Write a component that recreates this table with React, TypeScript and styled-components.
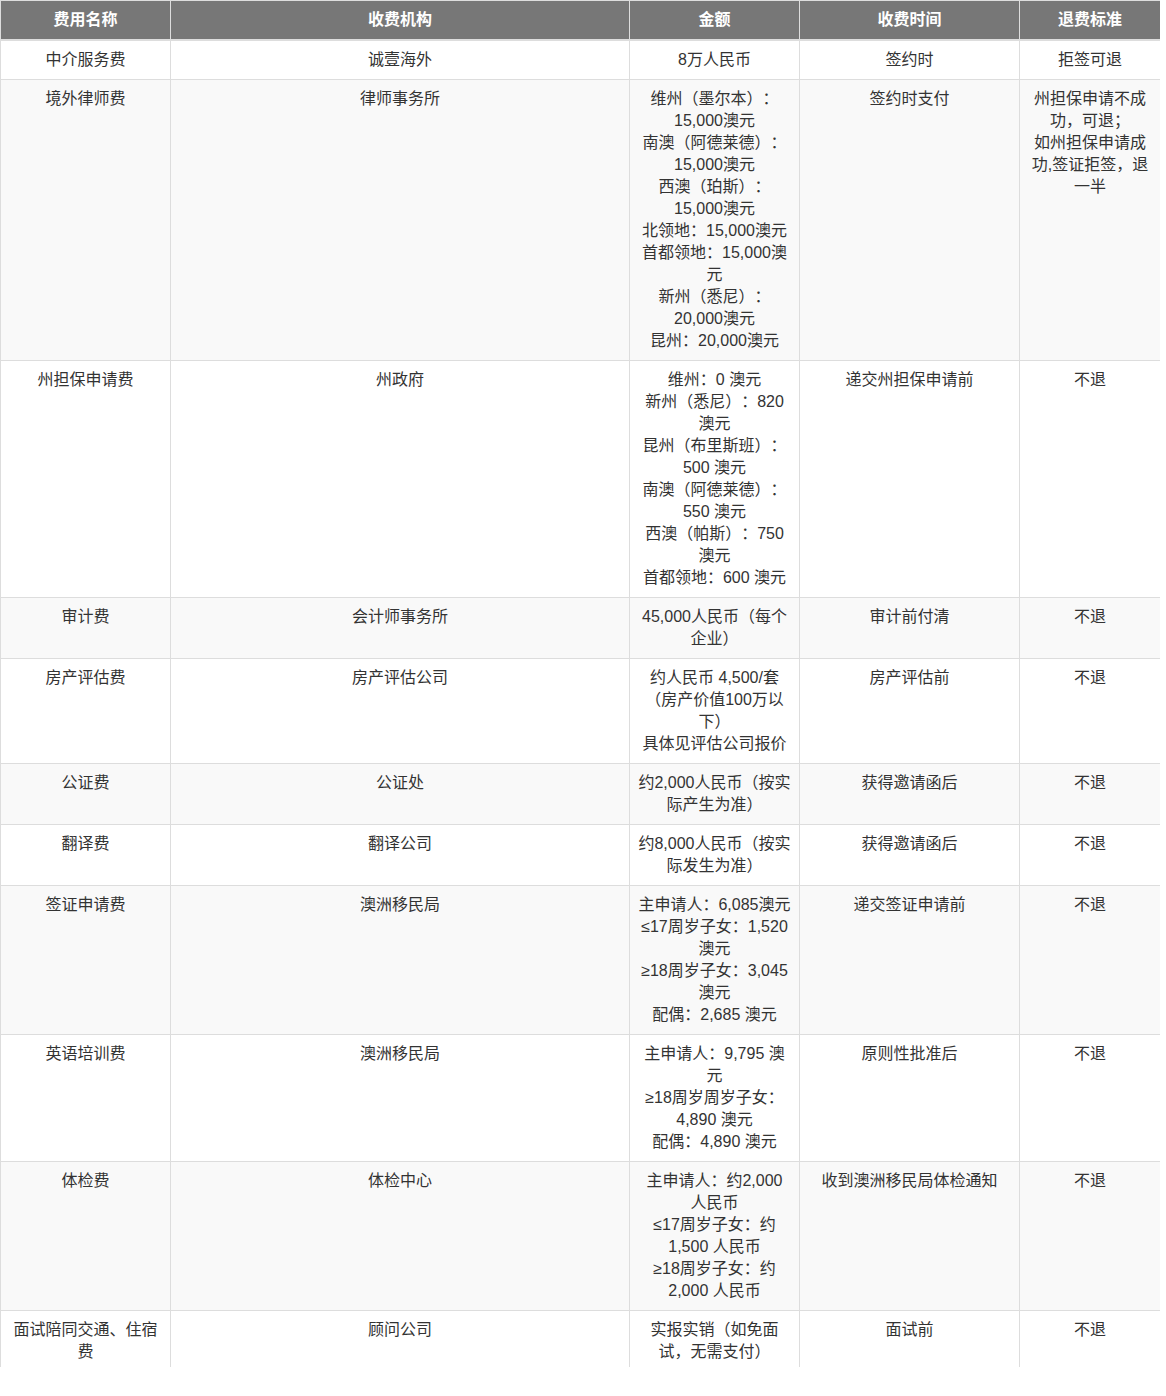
import React from "react"
import styled, { createGlobalStyle } from "styled-components"

const GlobalStyle = createGlobalStyle`
  html, body {
    margin: 0;
    padding: 0;
    background: #fff;
  }
  body {
    font-family: "Liberation Sans", Arial, "Noto Sans CJK SC", sans-serif;
    color: #333;
  }
`

type Fee = {
  name: string
  org: string
  amount: string[]
  time: string
  refund: string[]
}

const fees: Fee[] = [
  { name: "中介服务费", org: "诚壹海外", amount: ["8万人民币"], time: "签约时", refund: ["拒签可退"] },
  {
    name: "境外律师费",
    org: "律师事务所",
    amount: [
      "维州（墨尔本）：15,000澳元",
      "南澳（阿德莱德）：15,000澳元",
      "西澳（珀斯）：15,000澳元",
      "北领地：15,000澳元",
      "首都领地：15,000澳元",
      "新州（悉尼）：20,000澳元",
      "昆州：20,000澳元",
    ],
    time: "签约时支付",
    refund: ["州担保申请不成功，可退；", "如州担保申请成功,签证拒签，退一半"],
  },
  {
    name: "州担保申请费",
    org: "州政府",
    amount: [
      "维州：0 澳元",
      "新州（悉尼）：820 澳元",
      "昆州（布里斯班）：500 澳元",
      "南澳（阿德莱德）：550 澳元",
      "西澳（帕斯）：750 澳元",
      "首都领地：600 澳元",
    ],
    time: "递交州担保申请前",
    refund: ["不退"],
  },
  { name: "审计费", org: "会计师事务所", amount: ["45,000人民币（每个企业）"], time: "审计前付清", refund: ["不退"] },
  {
    name: "房产评估费",
    org: "房产评估公司",
    amount: ["约人民币 4,500/套（房产价值100万以下）", "具体见评估公司报价"],
    time: "房产评估前",
    refund: ["不退"],
  },
  { name: "公证费", org: "公证处", amount: ["约2,000人民币（按实际产生为准）"], time: "获得邀请函后", refund: ["不退"] },
  { name: "翻译费", org: "翻译公司", amount: ["约8,000人民币（按实际发生为准）"], time: "获得邀请函后", refund: ["不退"] },
  {
    name: "签证申请费",
    org: "澳洲移民局",
    amount: ["主申请人：6,085澳元", "≤17周岁子女：1,520 澳元", "≥18周岁子女：3,045 澳元", "配偶：2,685 澳元"],
    time: "递交签证申请前",
    refund: ["不退"],
  },
  {
    name: "英语培训费",
    org: "澳洲移民局",
    amount: ["主申请人：9,795 澳元", "≥18周岁周岁子女：4,890 澳元", "配偶：4,890 澳元"],
    time: "原则性批准后",
    refund: ["不退"],
  },
  {
    name: "体检费",
    org: "体检中心",
    amount: ["主申请人：约2,000 人民币", "≤17周岁子女：约1,500 人民币", "≥18周岁子女：约2,000 人民币"],
    time: "收到澳洲移民局体检通知",
    refund: ["不退"],
  },
  {
    name: "面试陪同交通、住宿费",
    org: "顾问公司",
    amount: ["实报实销（如免面试，无需支付）"],
    time: "面试前",
    refund: ["不退"],
  },
]

const columns = [
  { title: "费用名称", width: 170 },
  { title: "收费机构", width: 459 },
  { title: "金额", width: 170 },
  { title: "收费时间", width: 220 },
  { title: "退费标准", width: 141 },
]

export default function App() {
  return (
    <>
      <GlobalStyle />
      <Frame>
        <Table>
          <colgroup>
            {columns.map((c) => (
              <col key={c.title} style={{ width: c.width }} />
            ))}
          </colgroup>
          <thead>
            <tr>
              {columns.map((c) => (
                <HeadCell key={c.title}>{c.title}</HeadCell>
              ))}
            </tr>
          </thead>
          <tbody>
            {fees.map((fee, i) => (
              <Row key={fee.name} $striped={i % 2 === 1}>
                <Cell>{fee.name}</Cell>
                <Cell>{fee.org}</Cell>
                <Cell>
                  <Lines items={fee.amount} />
                </Cell>
                <Cell>{fee.time}</Cell>
                <Cell>
                  <Lines items={fee.refund} />
                </Cell>
              </Row>
            ))}
          </tbody>
        </Table>
      </Frame>
    </>
  )
}

const Lines = ({ items }: { items: string[] }) => (
  <>
    {items.map((text, i) => (
      <Line key={i}>{text}</Line>
    ))}
  </>
)

// the source view is cut off just above the last row's bottom border
const Frame = styled.div`
  width: 1160px;
  height: 1367px;
  overflow: hidden;
`

const Table = styled.table`
  width: 1160px;
  table-layout: fixed;
  border-collapse: collapse;
  font-size: 16px;
  line-height: 22px;
  text-spacing-trim: space-all;
`

const HeadCell = styled.th`
  background: #777;
  color: #fff;
  font-weight: bold;
  text-align: center;
  vertical-align: top;
  padding: 8px;
  border: 1px solid #ddd;
  border-bottom-width: 2px;
`

const Row = styled.tr<{ $striped: boolean }>`
  background: ${({ $striped }) => ($striped ? "#f9f9f9" : "#fff")};
`

const Cell = styled.td`
  text-align: center;
  vertical-align: top;
  padding: 8px;
  border: 1px solid #ddd;
  color: #333;
`

const Line = styled.div`
  display: block;
`
